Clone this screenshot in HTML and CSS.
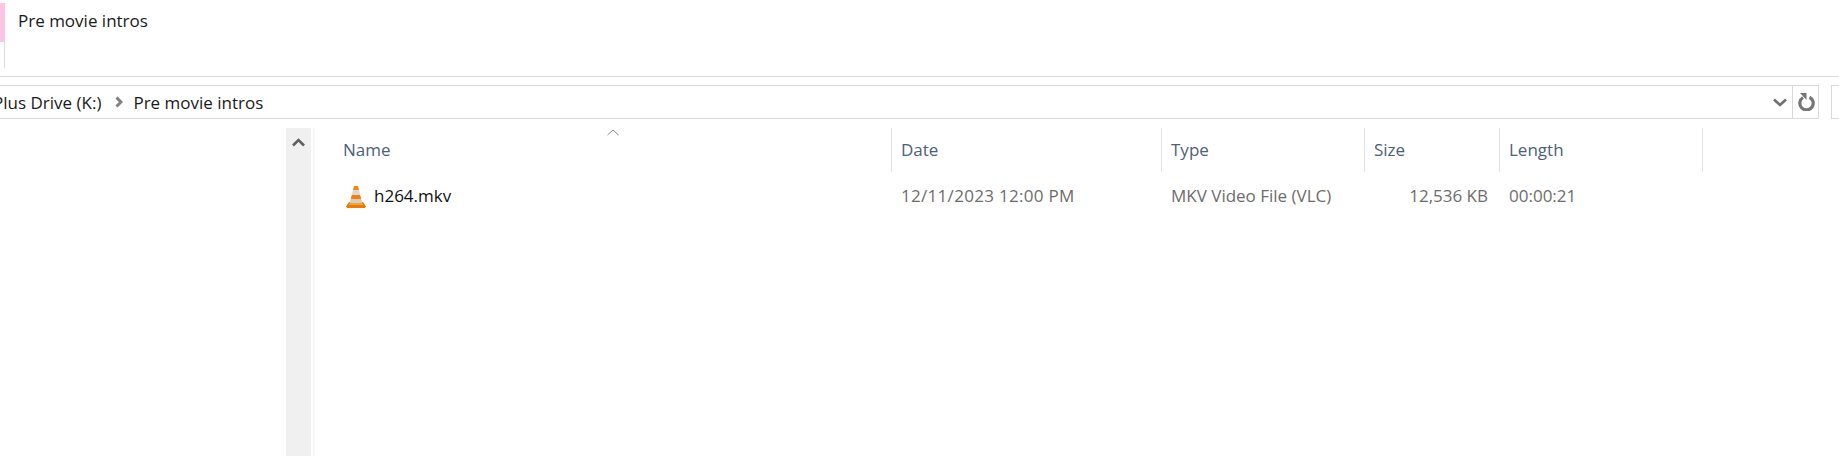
FILE: index.html
```html
<!DOCTYPE html>
<html lang="en">
  <head>
    <meta charset="UTF-8" />
    <meta name="viewport" content="width=device-width, initial-scale=1.0" />
    <title>Pre movie intros</title>
    <link rel="stylesheet" href="styles.css">
  </head>
  <body>
    <div class="ribbon">
      <div class="tab-mark">
        <div class="tab-pink"></div>
        <div class="tab-line"></div>
      </div>
      <div class="ribbon-title">Pre movie intros</div>
    </div>

    <div class="address-row">
      <div class="address">
        <div class="crumbs">
          <span>Plus Drive (K:)</span>
          <svg class="crumb-sep" width="8" height="12" viewBox="0 0 8 12"><path d="M1.500 1.500 6 6l-4.500 4.500" fill="none" stroke="#808080" stroke-width="3"/></svg>
          <span>Pre movie intros</span>
        </div>
        <svg class="addr-drop" width="14" height="9" viewBox="0 0 14 9"><path d="M1 1.500 7 7l6-5.500" fill="none" stroke="#707070" stroke-width="2.600"/></svg>
        <div class="addr-refresh">
          <svg width="18" height="18" viewBox="0 0 18 18"><path d="M6 4.500A6.700 6.700 0 1 0 12.500 4.200" fill="none" stroke="#767676" stroke-width="3.200"/><path d="M3 0h6.500v7z" fill="#767676"/></svg>
        </div>
      </div>
      <div class="search"></div>
    </div>

    <div class="main">
      <div class="nav"></div>
      <div class="scrollbar">
        <svg width="13" height="9" viewBox="0 0 13 9"><path d="M1 7.500 6.500 2 12 7.500" fill="none" stroke="#606060" stroke-width="2.600"/></svg>
      </div>
      <div class="scroll-edge"></div>
      <div class="list">
        <svg class="sort-caret" width="12" height="7" viewBox="0 0 12 7"><path d="M.5 6 6 1l5.500 5" fill="none" stroke="#888" stroke-width="1"/></svg>
        <div class="columns head">
          <div class="col-name">Name</div>
          <div class="col">Date</div>
          <div class="col">Type</div>
          <div class="col">Size</div>
          <div class="col col-last">Length</div>
        </div>
        <div class="columns row">
          <div class="file-name">
            <svg class="vlc" width="20" height="23" viewBox="0 0 20 23">
              <path d="M0 21.500 3 17h14l3 4.500L19 23H1z" fill="#e87a06"/>
              <path d="M8 1h4l1 4H7z" fill="#f08a0a"/>
              <path d="M7 5h6l1.200 5H5.800z" fill="#d9d9d9"/>
              <path d="M5.800 10h8.400l1.200 4.500H4.600z" fill="#f57f0c"/>
              <path d="M4.600 14.500h10.800l1 3.500H3.600z" fill="#cfcfcf"/>
              <path d="M3.600 18h12.800l1 2H2.600z" fill="#f9a030"/>
            </svg>
            <span>h264.mkv</span>
          </div>
          <div class="cell cell-date">12/11/2023 12:00 PM</div>
          <div class="cell">MKV Video File (VLC)</div>
          <div class="cell cell-size">12,536 KB</div>
          <div class="cell">00:00:21</div>
        </div>
      </div>
    </div>
  </body>
</html>
```

FILE: styles.css
```css
html, body {
  margin: 0;
  height: 456px;
  overflow: hidden;
  background: #fff;
}
body {
  font-family: "Open Sans", "Noto Sans", sans-serif;
  font-size: 17px;
  color: #1a1a1a;
}
.ribbon {
  display: flex;
  height: 76px;
  border-bottom: 1px solid #dadada;
  box-sizing: content-box;
}
.tab-mark {
  width: 5px;
  padding-top: 3px;
}
.tab-pink {
  height: 39px;
  background: #fdc3e0;
}
.tab-line {
  width: 1px;
  height: 26px;
  margin-left: 4px;
  background: #dcdcdc;
}
.ribbon-title {
  margin: 10px 0 0 13px;
  line-height: 22px;
}

.address-row {
  display: flex;
  margin-top: 8px;
  height: 34px;
}
.address {
  display: flex;
  align-items: center;
  width: 1819px;
  box-sizing: border-box;
  border: 1px solid #d9d9d9;
  border-left: 0;
}
.crumbs {
  display: flex;
  align-items: center;
  flex: 1;
  margin-left: -7px;
}
.crumb-sep {
  margin: 0 10px 0 14px;
}
.addr-drop {
  margin-right: 5px;
}
.addr-refresh {
  display: flex;
  align-items: center;
  justify-content: center;
  width: 25px;
  height: 100%;
  border-left: 1px solid #d9d9d9;
}
.search {
  margin-left: 12px;
  flex: 1;
  border: 1px solid #d9d9d9;
  border-right: 0;
}

.main {
  display: flex;
  margin-top: 9px;
  height: 328px;
}
.nav {
  width: 286px;
}
.scrollbar {
  width: 25px;
  padding-top: 10px;
  box-sizing: border-box;
  display: flex;
  justify-content: center;
  align-items: flex-start;
  background: #f0f0f0;
}
.scroll-edge {
  width: 2px;
  margin-left: 2px;
  background: #f7f7f7;
}
.list {
  position: relative;
  flex: 1;
  padding-left: 28px;
}
.sort-caret {
  position: absolute;
  left: 292px;
  top: 1px;
}
.columns {
  display: grid;
  grid-template-columns: 548px 270px 203px 135px 204px;
  width: 1360px;
}
.head {
  height: 41px;
  color: #4c607a;
}
.head > div {
  line-height: 44px;
}
.col {
  border-left: 1px solid #e3e3e3;
  padding-left: 9px;
}
.col-last {
  border-right: 1px solid #e3e3e3;
}
.row {
  margin-top: 14px;
  line-height: 26px;
  color: #6d6d6d;
}
.file-name {
  display: flex;
  align-items: center;
  color: #111;
}
.vlc {
  margin: 0 8px 0 3px;
}
.cell {
  padding-left: 10px;
}
.cell-date {
  letter-spacing: .3px;
}
.cell-size {
  padding: 0 11px 0 0;
  text-align: right;
}
```
